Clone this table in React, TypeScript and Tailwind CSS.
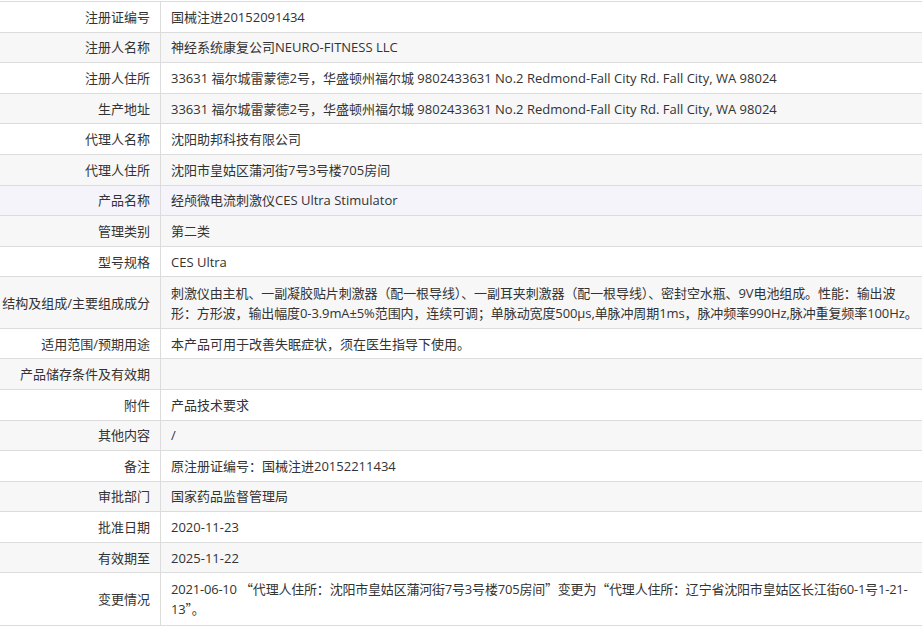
import React from "react";

type Row = { label: string; value: React.ReactNode; tone?: "hover"; extra?: string };

const Q = ({ children }: { children: React.ReactNode }) => (
  <span style={{ fontFamily: '"Noto Sans CJK SC", sans-serif' }}>{children}</span>
);

const rows: Row[] = [
  { label: "注册证编号", value: "国械注进20152091434" },
  { label: "注册人名称", value: "神经系统康复公司NEURO-FITNESS LLC" },
  {
    label: "注册人住所",
    value: "33631 福尔城雷蒙德2号，华盛顿州福尔城 9802433631 No.2 Redmond-Fall City Rd. Fall City, WA 98024",
  },
  {
    label: "生产地址",
    value: "33631 福尔城雷蒙德2号，华盛顿州福尔城 9802433631 No.2 Redmond-Fall City Rd. Fall City, WA 98024",
  },
  { label: "代理人名称", value: "沈阳助邦科技有限公司" },
  { label: "代理人住所", value: "沈阳市皇姑区蒲河街7号3号楼705房间" },
  { label: "产品名称", value: "经颅微电流刺激仪CES Ultra Stimulator", tone: "hover" },
  { label: "管理类别", value: "第二类" },
  { label: "型号规格", value: "CES Ultra" },
  {
    label: "结构及组成/主要组成成分",
    extra: "tracking-[-0.1px] py-[5.2px]",
    value: (
      <>
        刺激仪由主机、一副凝胶贴片刺激器（配一根导线）、一副耳夹刺激器（配一根导线）、密封空水瓶、9V电池组成。性能：输出波
        <br />
        形：方形波，输出幅度0-3.9mA±5%范围内，连续可调；单脉动宽度500μs,单脉冲周期1ms，脉冲频率990Hz,脉冲重复频率100Hz。
      </>
    ),
  },
  { label: "适用范围/预期用途", value: "本产品可用于改善失眠症状，须在医生指导下使用。" },
  { label: "产品储存条件及有效期", value: "" },
  { label: "附件", value: "产品技术要求" },
  { label: "其他内容", value: "/" },
  { label: "备注", value: "原注册证编号：国械注进20152211434" },
  { label: "审批部门", value: "国家药品监督管理局" },
  { label: "批准日期", value: "2020-11-23" },
  { label: "有效期至", value: "2025-11-22" },
  {
    label: "变更情况",
    extra: "tracking-[-0.2px] py-[6px]",
    value: (
      <>
        2021-06-10 <Q>“</Q>代理人住所：沈阳市皇姑区蒲河街7号3号楼705房间<Q>”</Q>变更为<Q>“</Q>代理人住所：辽宁省沈阳市皇姑区长江街60-1号1-21-
        <br />
        13<Q>”</Q>。
      </>
    ),
  },
];

const App = () => {
  return (
    <div
      className="min-h-screen bg-white pt-px text-[13px] text-[#333] overflow-hidden"
      style={{ fontFamily: '"Open Sans", "Noto Sans CJK SC", sans-serif' }}
    >
      <div className="w-[940px] border-t border-[#dcdcdc]">
        {rows.map((row, i) => {
          const bg =
            row.tone === "hover"
              ? "bg-[#f4f4fa]"
              : i % 2 === 0
                ? "bg-white"
                : "bg-[#f7f7f7]";
          return (
            <div key={i} className={`flex border-b border-[#dcdcdc] ${bg}`}>
              <div className="w-[161px] shrink-0 border-r border-[#dcdcdc] flex items-center justify-end pr-[10px] leading-[20px] py-[4.8px] whitespace-nowrap">
                {row.label}
              </div>
              <div
                className={`flex-1 pl-[10px] leading-[20px] py-[4.8px] whitespace-nowrap min-h-[29.6px] ${row.extra ?? ""}`}
              >
                {row.value}
              </div>
            </div>
          );
        })}
      </div>
    </div>
  );
};

export default App;
